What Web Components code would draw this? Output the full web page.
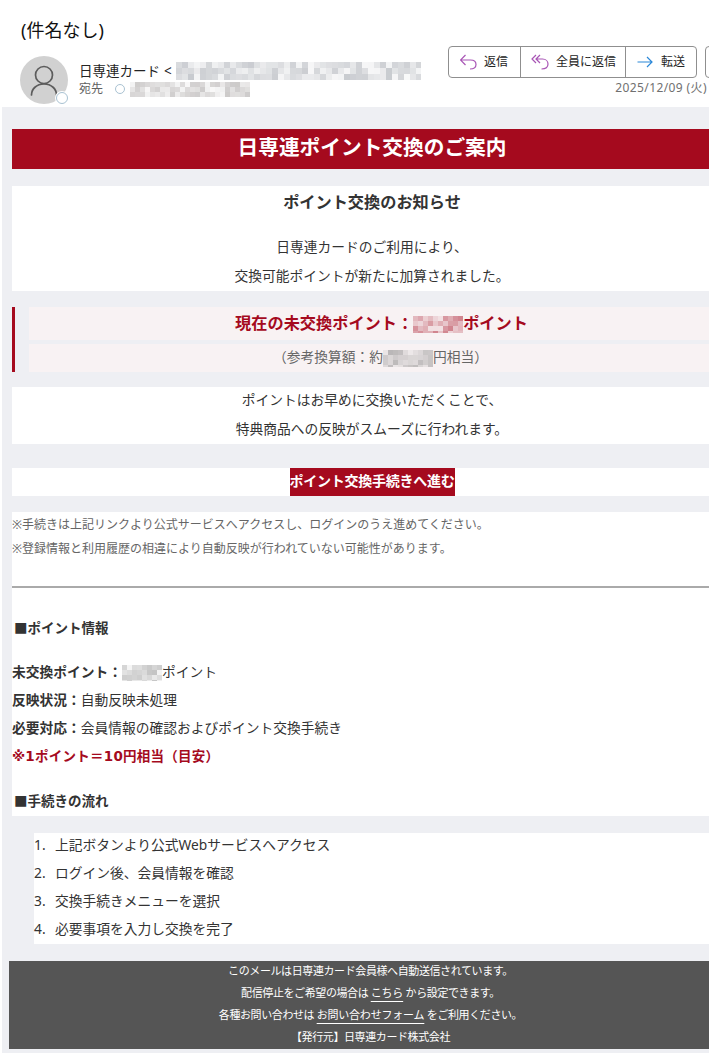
<!DOCTYPE html>
<html lang="ja">
<head>
<meta charset="utf-8">
<title>(件名なし)</title>
<style>
  html, body { margin: 0; padding: 0; height: 100%; overflow: hidden; background: #fff; }
  body { font-family: "Noto Sans", "Noto Sans CJK JP", sans-serif; color: #333; }
</style>
</head>
<body>
<mail-header></mail-header>
<mail-body>
  <title-bar>日専連ポイント交換のご案内</title-bar>
  <white-box gap="16" style="padding-bottom:1px">
    <h-lead>ポイント交換のお知らせ</h-lead>
    <center-lines>日専連カードのご利用により、<br>交換可能ポイントが新たに加算されました。</center-lines>
  </white-box>
  <point-callout></point-callout>
  <white-box gap="24" style="height:57px;overflow:hidden"><center-lines style="margin-top:-2.500px">ポイントはお早めに交換いただくことで、<br>特典商品への反映がスムーズに行われます。</center-lines></white-box>
  <white-box gap="16"><cta-button>ポイント交換手続きへ進む</cta-button></white-box>
  <info-panel></info-panel>
  <step-list></step-list>
  <mail-footer></mail-footer>
</mail-body>
<script>
"use strict";

// deterministic mosaic standing in for the blurred-out values
class MosaicBlur extends HTMLElement {
  constructor() {
    super();
    this.attachShadow({ mode: "open" });
  }

  connectedCallback() {
    let width = Number(this.getAttribute("w"));
    let height = Number(this.getAttribute("h"));
    let cell = Number(this.getAttribute("cell") || 5);
    let color = this.getAttribute("color") || "#808080";
    let seed = Number(this.getAttribute("seed") || 7);
    let rects = "";
    for (let y = 0; y < height; y += cell) {
      for (let x = 0; x < width; x += cell) {
        seed = (seed * 9301 + 49297) % 233280;
        let opacity = (0.06 + (seed / 233280) * 0.42).toFixed(2);
        rects += `<rect x="${x}" y="${y}" width="${cell}" height="${cell}" fill="${color}" opacity="${opacity}"/>`;
      }
    }
    this.shadowRoot.innerHTML = `
      <style>
        :host { display: inline-block; vertical-align: middle; line-height: 0; }
      </style>
      <svg width="${width}" height="${height}" viewBox="0 0 ${width} ${height}">${rects}</svg>
    `;
  }
}
customElements.define("mosaic-blur", MosaicBlur);

class MailHeader extends HTMLElement {
  constructor() {
    super();
    let shadowRoot = this.attachShadow({ mode: "open" });
    shadowRoot.innerHTML = `
      <style>
        :host { display: block; height: 107px; overflow: hidden; color: #242424; }
        #subject { height: 46px; padding: 16px 0 0 21px; box-sizing: border-box; font-size: 18px; line-height: 28px; color: #111; }
        #row { display: flex; }
        #avatar { position: relative; flex: none; width: 48px; height: 48px; margin: 10px 0 0 20px; border-radius: 50%; background: #d1d1d1; }
        #avatar svg { display: block; }
        #presence { position: absolute; right: 0; bottom: 0; width: 12px; height: 12px; box-sizing: border-box; border: 1.5px solid #a9c2d2; border-radius: 50%; background: #fff; box-shadow: 0 0 0 1px #fff; }
        #who { flex: none; margin: 15px 0 0 11px; width: 360px; }
        #sender { display: flex; align-items: center; height: 20px; font-size: 13.500px; line-height: 20px; gap: 4px; }
        #to { display: flex; align-items: center; height: 16px; font-size: 12px; line-height: 16px; color: #616161; }
        #ring { width: 10px; height: 10px; margin: 0 5px 0 12px; box-sizing: border-box; border: 1px solid #a9c2d2; border-radius: 50%; }
        #side { flex: none; margin-left: 9px; }
        #date { margin-top: 2px; width: 261px; text-align: right; padding-right: 2px; box-sizing: border-box; font-size: 12px; letter-spacing: 0.4px; line-height: 16px; color: #707070; white-space: nowrap; }
      </style>
      <div id="subject">(件名なし)</div>
      <div id="row">
        <div id="avatar">
          <svg width="48" height="48" viewBox="0 0 48 48" fill="none" stroke="#5c5c5c" stroke-width="1.700">
            <circle cx="24" cy="19" r="8.500"/>
            <path d="M11.500 39c0-6 5-11 12.500-11s12.500 5 12.500 11" stroke-linecap="round"/>
          </svg>
          <span id="presence"></span>
        </div>
        <div id="who">
          <div id="sender">日専連カード <span>&lt;</span><mosaic-blur w="245" h="18" cell="6" color="#8d929c" seed="11"></mosaic-blur></div>
          <div id="to">宛先<span id="ring"></span><mosaic-blur w="120" h="15" cell="5" color="#95908f" seed="23"></mosaic-blur></div>
        </div>
        <div id="side">
          <mail-actions></mail-actions>
          <div id="date">2025/12/09 (火)</div>
        </div>
      </div>
    `;
  }
}
customElements.define("mail-header", MailHeader);

class MailActions extends HTMLElement {
  constructor() {
    super();
    let shadowRoot = this.attachShadow({ mode: "open" });
    shadowRoot.innerHTML = `
      <style>
        :host { display: flex; gap: 8px; }
        #group { display: flex; height: 32px; box-sizing: border-box; border: 1px solid #8f8f8f; border-radius: 4px; background: #fff; font-size: 12px; color: #242424; }
        .btn { display: flex; align-items: center; gap: 6px; box-sizing: border-box; white-space: nowrap; }
        .btn + .btn { border-left: 1px solid #8f8f8f; }
        .btn span { margin-bottom: 2px; }
        svg { display: block; flex: none; fill: none; stroke-width: 1.2; }
        #more { width: 20px; height: 32px; box-sizing: border-box; border: 1px solid #8f8f8f; border-radius: 4px; }
      </style>
      <div id="group">
        <div class="btn" style="width:71px;padding-left:11px;">
          <svg width="18" height="18" viewBox="0 0 18 18" stroke="#a855b5"><path d="M5.500 2 .5 7 5.500 12M.5 7H10.500C14 7 16 9 16 11.500S14 16 10 16"/></svg>
          <span>返信</span>
        </div>
        <div class="btn" style="width:105px;padding-left:10px;gap:7px;">
          <svg width="18" height="18" viewBox="0 0 18 18" stroke="#a855b5"><path d="M5 2 1 6 5 10M9 2 5 6 9 10M5 6H11.500C15 6 17 8.500 17 11S15 16 10.500 16"/></svg>
          <span>全員に返信</span>
        </div>
        <div class="btn" style="width:71px;padding-left:11px;">
          <svg width="18" height="18" viewBox="0 0 18 18" stroke="#2b88d8"><path d="M.5 9H15M10 4 15 9 10 14"/></svg>
          <span>転送</span>
        </div>
      </div>
      <div id="more"></div>
    `;
  }
}
customElements.define("mail-actions", MailActions);

class MailBody extends HTMLElement {
  constructor() {
    super();
    let shadowRoot = this.attachShadow({ mode: "open" });
    shadowRoot.innerHTML = `
      <style>
        :host { display: block; margin-left: 2px; height: 946px; box-sizing: border-box; padding: 22px 0 0 10px; background: #eeeff3; overflow: hidden; }
        #inner { width: 720px; }
      </style>
      <div id="inner"><slot></slot></div>
    `;
  }
}
customElements.define("mail-body", MailBody);

class TitleBar extends HTMLElement {
  constructor() {
    super();
    let shadowRoot = this.attachShadow({ mode: "open" });
    shadowRoot.innerHTML = `
      <style>
        :host { display: block; height: 40px; margin-bottom: 17px; background: #a50a1e; color: #fff; font-size: 20.700px; font-weight: 700; line-height: 37px; text-align: center; }
      </style>
      <slot></slot>
    `;
  }
}
customElements.define("title-bar", TitleBar);

class WhiteBox extends HTMLElement {
  constructor() {
    super();
    let shadowRoot = this.attachShadow({ mode: "open" });
    shadowRoot.innerHTML = `
      <style>
        :host { display: block; background: #fff; margin-bottom: var(--gap, 16px); }
      </style>
      <slot></slot>
    `;
  }

  connectedCallback() {
    this.style.setProperty("--gap", this.getAttribute("gap") + "px");
  }
}
customElements.define("white-box", WhiteBox);

class HLead extends HTMLElement {
  constructor() {
    super();
    let shadowRoot = this.attachShadow({ mode: "open" });
    shadowRoot.innerHTML = `
      <style>
        :host { display: block; height: 32px; margin-bottom: 14px; font-size: 16.200px; font-weight: 700; line-height: 33px; text-align: center; }
      </style>
      <slot></slot>
    `;
  }
}
customElements.define("h-lead", HLead);

class CenterLines extends HTMLElement {
  constructor() {
    super();
    let shadowRoot = this.attachShadow({ mode: "open" });
    shadowRoot.innerHTML = `
      <style>
        :host { display: block; font-size: 13.750px; line-height: 29px; text-align: center; }
      </style>
      <slot></slot>
    `;
  }
}
customElements.define("center-lines", CenterLines);

class PointCallout extends HTMLElement {
  constructor() {
    super();
    let shadowRoot = this.attachShadow({ mode: "open" });
    shadowRoot.innerHTML = `
      <style>
        :host { display: flex; flex-direction: column; gap: 4px; height: 65px; margin-bottom: 15px; padding-left: 14px; border-left: 3px solid #a50a1e; text-align: center; }
        div { background: #f8f2f3; }
        #now { height: 33px; padding-left: 2px; font-size: 16.200px; font-weight: 700; line-height: 32px; color: #a50a1e; }
        #yen { height: 28px; font-size: 13.750px; line-height: 26px; color: #666; }
      </style>
      <div id="now">現在の未交換ポイント：<mosaic-blur w="50" h="17" cell="5" color="#a50a1e" seed="31"></mosaic-blur>ポイント</div>
      <div id="yen">（参考換算額：約<mosaic-blur w="50" h="17" cell="5" color="#777" seed="47"></mosaic-blur>円相当）</div>
    `;
  }
}
customElements.define("point-callout", PointCallout);

class CtaButton extends HTMLElement {
  constructor() {
    super();
    let shadowRoot = this.attachShadow({ mode: "open" });
    shadowRoot.innerHTML = `
      <style>
        :host { display: block; height: 28px; text-align: center; }
        a { display: inline-block; height: 28px; background: #a50a1e; color: #fff; font-size: 14px; font-weight: 700; line-height: 26px; letter-spacing: -0.25px; text-decoration: none; }
      </style>
      <a href="#"><slot></slot></a>
    `;
  }
}
customElements.define("cta-button", CtaButton);

class InfoPanel extends HTMLElement {
  constructor() {
    super();
    let shadowRoot = this.attachShadow({ mode: "open" });
    shadowRoot.innerHTML = `
      <style>
        :host { display: block; box-sizing: border-box; height: 304px; margin-bottom: 17px; padding-top: 1px; background: #fff; font-size: 13.750px; }
        .note { height: 24px; font-size: 12px; line-height: 24px; color: #666; white-space: nowrap; }
        hr { height: 2px; margin: 25px 0 0; border: 0; background: #aaa; }
        h3 { margin: 0; padding-left: 2px; font-size: 13.500px; font-weight: 700; line-height: 24px; }
        #h1 { margin-top: 28px; margin-bottom: 18px; }
        #h2 { margin-top: 19px; }
        .row { height: 28px; line-height: 28px; white-space: nowrap; }
        .red { color: #a50a1e; font-weight: 700; font-family: "DejaVu Sans", "Noto Sans CJK JP", sans-serif; font-size: 13.500px; letter-spacing: 0.25px; }
      </style>
      <div class="note">※手続きは上記リンクより公式サービスへアクセスし、ログインのうえ進めてください。</div>
      <div class="note">※登録情報と利用履歴の相違により自動反映が行われていない可能性があります。</div>
      <hr>
      <h3 id="h1">■ポイント情報</h3>
      <div class="row"><b>未交換ポイント：</b><mosaic-blur w="40" h="16" cell="5" color="#777" seed="59"></mosaic-blur>ポイント</div>
      <div class="row"><b>反映状況：</b>自動反映未処理</div>
      <div class="row"><b>必要対応：</b>会員情報の確認およびポイント交換手続き</div>
      <div class="row red">※1ポイント＝10円相当（目安）</div>
      <h3 id="h2">■手続きの流れ</h3>
    `;
  }
}
customElements.define("info-panel", InfoPanel);

class StepList extends HTMLElement {
  constructor() {
    super();
    let shadowRoot = this.attachShadow({ mode: "open" });
    shadowRoot.innerHTML = `
      <style>
        :host { display: block; height: 111px; margin: 0 0 17px 22px; background: #fff; font-size: 13.750px; }
        ol { margin: 0; padding: 0; list-style: none; counter-reset: step; }
        li { display: flex; height: 28px; line-height: 24px; counter-increment: step; }
        li::before { content: counter(step) "."; flex: none; width: 21px; }
      </style>
      <ol>
        <li>上記ボタンより公式Webサービスへアクセス</li>
        <li>ログイン後、会員情報を確認</li>
        <li>交換手続きメニューを選択</li>
        <li>必要事項を入力し交換を完了</li>
      </ol>
    `;
  }
}
customElements.define("step-list", StepList);

class MailFooter extends HTMLElement {
  constructor() {
    super();
    let shadowRoot = this.attachShadow({ mode: "open" });
    shadowRoot.innerHTML = `
      <style>
        :host { display: block; margin-left: -3px; height: 88px; background: #555; color: #fff; font-size: 11px; text-align: center; letter-spacing: -0.4px; }
        div { height: 22px; line-height: 20px; }
        a { color: inherit; letter-spacing: -0.2px; text-decoration: underline; text-underline-offset: 4px; }
      </style>
      <div>このメールは日専連カード会員様へ自動送信されています。</div>
      <div>配信停止をご希望の場合は <a href="#">こちら</a> から設定できます。</div>
      <div>各種お問い合わせは <a href="#">お問い合わせフォーム</a> をご利用ください。</div>
      <div>【発行元】日専連カード株式会社</div>
    `;
  }
}
customElements.define("mail-footer", MailFooter);
</script>
</body>
</html>
